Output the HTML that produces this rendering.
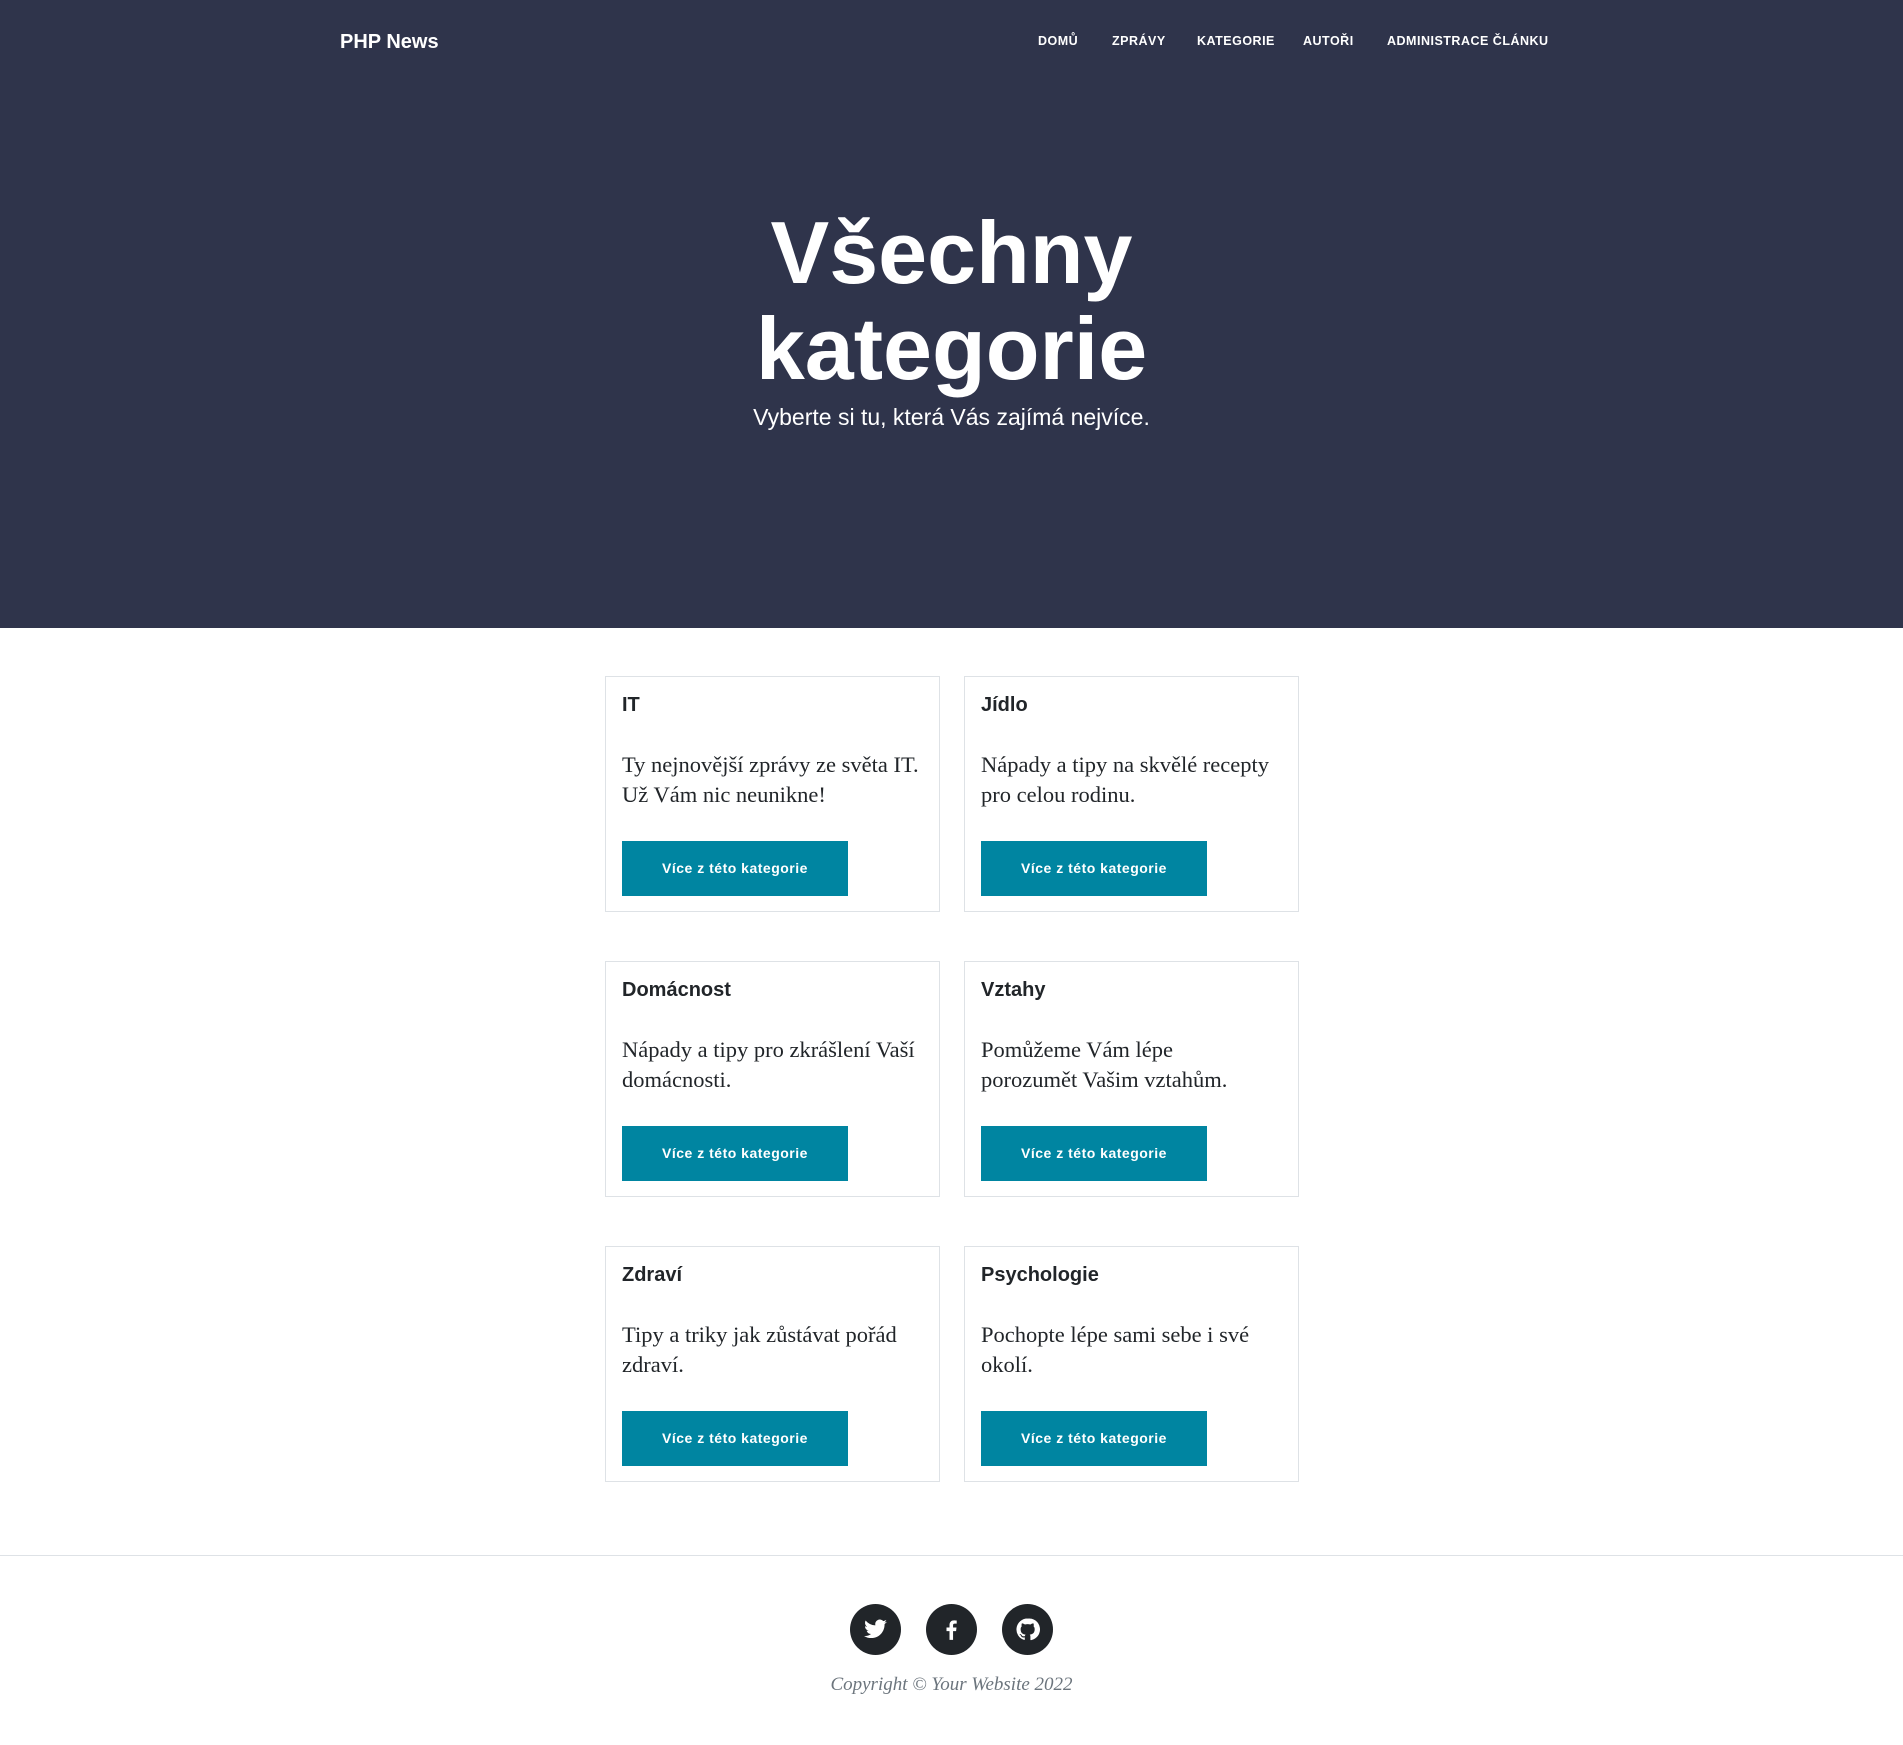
<!DOCTYPE html>
<html><head><meta charset="utf-8"><style>
*{box-sizing:border-box;margin:0;padding:0}
body{width:1903px;height:1745px;background:#fff;font-family:"Liberation Sans",sans-serif;position:relative;overflow:hidden}
.hero{position:absolute;left:0;top:0;width:1903px;height:628px;background:#2f344b}
.logo{position:absolute;left:340px;top:31px;color:#fff;font-weight:bold;font-size:20px}
.nav{position:absolute;top:34px;color:#fff;font-weight:bold;font-size:12.5px;letter-spacing:0.5px}
h1{position:absolute;left:0;width:1903px;top:205px;text-align:center;color:#fff;font-size:88px;line-height:96px;font-weight:bold}
.sub{position:absolute;left:0;width:1903px;top:404px;text-align:center;color:#fff;font-size:23px;font-weight:300}
.card{position:absolute;width:335px;height:236px;border:1px solid #dee2e6;padding:0 16px}
.card h5{position:absolute;left:16px;top:17px;font-size:20px;font-weight:bold;color:#212529}
.card p{position:absolute;left:16px;top:73px;width:302px;font-family:"Liberation Serif",serif;font-size:22.5px;line-height:30px;color:#212529}
.btn{position:absolute;left:16px;top:164px;width:226px;height:55px;background:#0085a1;color:#fff;font-weight:bold;font-size:14px;text-align:center;line-height:55px;letter-spacing:0.5px}
.hr{position:absolute;left:0;top:1555px;width:1903px;height:1px;background:#dee2e6}
.ic{position:absolute;top:1604px;width:51px;height:51px;border-radius:50%;background:#212529}
.ic svg{position:absolute;left:13px;top:13px;width:25px;height:25px}
.copy{position:absolute;left:0;width:1903px;top:1674px;text-align:center;font-family:"Liberation Serif",serif;font-style:italic;font-size:19px;color:#6c757d}
</style></head><body>
<div class="hero">
<div class="logo">PHP News</div>
<div class="nav" style="left:1038px">DOMŮ</div>
<div class="nav" style="left:1112px">ZPRÁVY</div>
<div class="nav" style="left:1197px">KATEGORIE</div>
<div class="nav" style="left:1303px">AUTOŘI</div>
<div class="nav" style="left:1387px">ADMINISTRACE ČLÁNKU</div>
<h1>Všechny<br>kategorie</h1>
<div class="sub">Vyberte si tu, která Vás zajímá nejvíce.</div>
</div>

<div class="card" style="left:605px;top:676px"><h5>IT</h5><p>Ty nejnovější zprávy ze světa IT. Už Vám nic neunikne!</p><div class="btn">Více z této kategorie</div></div>
<div class="card" style="left:964px;top:676px"><h5>Jídlo</h5><p>Nápady a tipy na skvělé recepty pro celou rodinu.</p><div class="btn">Více z této kategorie</div></div>
<div class="card" style="left:605px;top:961px"><h5>Domácnost</h5><p>Nápady a tipy pro zkrášlení Vaší domácnosti.</p><div class="btn">Více z této kategorie</div></div>
<div class="card" style="left:964px;top:961px"><h5>Vztahy</h5><p>Pomůžeme Vám lépe<br>porozumět Vašim vztahům.</p><div class="btn">Více z této kategorie</div></div>
<div class="card" style="left:605px;top:1246px"><h5>Zdraví</h5><p>Tipy a triky jak zůstávat pořád zdraví.</p><div class="btn">Více z této kategorie</div></div>
<div class="card" style="left:964px;top:1246px"><h5>Psychologie</h5><p>Pochopte lépe sami sebe i své okolí.</p><div class="btn">Více z této kategorie</div></div>

<div class="hr"></div>
<div class="ic" style="left:850px"><svg viewBox="0 0 24 24"><path fill="#fff" d="M23 4.6c-.8.4-1.7.6-2.6.7.9-.6 1.6-1.4 2-2.5-.9.5-1.9.9-2.9 1.1A4.5 4.5 0 0 0 11.8 8 12.8 12.8 0 0 1 2.5 3.3a4.5 4.5 0 0 0 1.4 6c-.7 0-1.4-.2-2-.6 0 2.2 1.5 4 3.6 4.4-.7.2-1.4.2-2 .1.6 1.8 2.2 3.1 4.2 3.1A9 9 0 0 1 1 18.2 12.8 12.8 0 0 0 7.9 20.2c8.300 0 12.8-6.9 12.8-12.8v-.6c.9-.6 1.6-1.4 2.3-2.2z"/></svg></div>
<div class="ic" style="left:926px"><svg viewBox="0 0 24 24"><path fill="#fff" d="M13.5 22v-8.5h2.9l.4-3.4h-3.3V8c0-1 .3-1.6 1.7-1.6h1.8v-3C16.7 3.3 15.6 3.2 14.4 3.2c-2.6 0-4.3 1.6-4.3 4.4v2.5H7.2v3.4h2.9V22z"/></svg></div>
<div class="ic" style="left:1002px"><svg viewBox="0 0 24 24"><path fill="#fff" d="M12 1.5A10.5 10.5 0 0 0 8.7 22c.5.1.7-.2.7-.5v-1.9c-2.9.6-3.5-1.2-3.5-1.2-.5-1.2-1.2-1.5-1.2-1.5-.9-.6.1-.6.1-.6 1 .1 1.6 1.1 1.6 1.1.9 1.6 2.5 1.1 3.1.9.1-.7.4-1.1.7-1.4-2.3-.3-4.8-1.2-4.8-5.2 0-1.1.4-2.1 1.1-2.8-.1-.3-.5-1.300.1-2.8 0 0 .9-.3 2.9 1.1a10 10 0 0 1 5.3 0c2-1.4 2.9-1.1 2.9-1.1.6 1.5.2 2.5.1 2.8.7.7 1.1 1.7 1.1 2.8 0 4-2.5 4.9-4.8 5.2.4.3.7 1 .7 1.9v2.9c0 .3.2.6.7.5A10.5 10.5 0 0 0 12 1.5z"/></svg></div>
<div class="copy">Copyright © Your Website 2022</div>
</body></html>
